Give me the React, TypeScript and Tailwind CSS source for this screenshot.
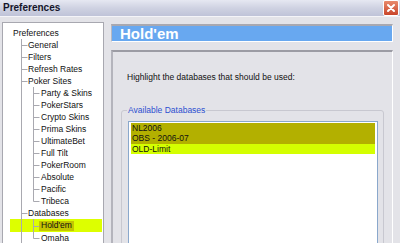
import type { ReactNode } from 'react'

type Node = { label: string; level: number; lines: number[]; last?: boolean; selected?: boolean }

// lines: ancestor guide columns that run through this row
const TREE: Node[] = [
  { label: 'Preferences', level: 0, lines: [] },
  { label: 'General', level: 1, lines: [] },
  { label: 'Filters', level: 1, lines: [] },
  { label: 'Refresh Rates', level: 1, lines: [] },
  { label: 'Poker Sites', level: 1, lines: [] },
  { label: 'Party & Skins', level: 2, lines: [1] },
  { label: 'PokerStars', level: 2, lines: [1] },
  { label: 'Crypto Skins', level: 2, lines: [1] },
  { label: 'Prima Skins', level: 2, lines: [1] },
  { label: 'UltimateBet', level: 2, lines: [1] },
  { label: 'Full Tilt', level: 2, lines: [1] },
  { label: 'PokerRoom', level: 2, lines: [1] },
  { label: 'Absolute', level: 2, lines: [1] },
  { label: 'Pacific', level: 2, lines: [1] },
  { label: 'Tribeca', level: 2, lines: [1], last: true },
  { label: 'Databases', level: 1, lines: [] },
  { label: "Hold'em", level: 2, lines: [1], selected: true },
  { label: 'Omaha', level: 2, lines: [1], last: true },
]

const DATABASES = [
  { name: 'NL2006', bg: 'bg-[#b3b000]' },
  { name: 'OBS - 2006-07', bg: 'bg-[#b3b000]' },
  { name: 'OLD-Limit', bg: 'bg-[#d4ff00]' },
]

const LINE = '#a9a9b0'

function Guides({ node, h }: { node: Node; h: number }) {
  if (node.level === 0) return <div className="w-[10px] shrink-0" />
  const width = node.level === 1 ? 25 : 38
  const col = node.level === 1 ? 18.5 : 30.5
  const mid = Math.round(h / 2) + 0.5
  return (
    <svg width={width} height={h} className="shrink-0">
      {node.lines.includes(1) && <line x1={18.5} y1={0} x2={18.5} y2={h} stroke={LINE} />}
      <line x1={col} y1={0} x2={col} y2={node.last ? mid : h} stroke={LINE} />
      <line x1={col} y1={mid} x2={col + 6} y2={mid} stroke={LINE} />
    </svg>
  )
}

function TreeRow({ node }: { node: Node }) {
  if (node.selected) {
    return (
      <div className="flex items-center h-[13px] text-[8.5px] leading-none text-[#111] bg-gradient-to-r from-white from-[7px] to-[#ddff00] to-[7px] mr-[1px]">
        <Guides node={node} h={13} />
        <span className="bg-[#c4c600] px-[2px] h-[10px] flex items-center -ml-[2px]">{node.label}</span>
      </div>
    )
  }
  return (
    <div className="flex items-center h-[12px] text-[8.5px] leading-none text-[#111]">
      <Guides node={node} h={12} />
      <span>{node.label}</span>
    </div>
  )
}

function Sunken({ children, className }: { children: ReactNode; className?: string }) {
  return (
    <div className={`border-t-2 border-l-2 border-t-[#9c9ca4] border-l-[#b4b4bc] border-r border-b border-r-white border-b-white ${className ?? ''}`}>
      {children}
    </div>
  )
}

export default function App() {
  return (
    <div
      className="w-[400px] h-[243px] overflow-hidden bg-[#e3e3e8] flex flex-col"
      style={{ fontFamily: '"Liberation Sans", Arial, sans-serif' }}
    >
      {/* Title bar */}
      <div className="h-[17px] shrink-0 flex items-center justify-between pl-[3px] bg-gradient-to-b from-[#e6e8f2] via-[#cfd2e2] to-[#bfc3d8] border-b border-[#f4f4f8]">
        <span className="text-[10px] font-bold text-[#15152a] leading-none">Preferences</span>
        <div className="w-[16px] h-[16px] rounded-[2px] border border-white bg-gradient-to-b from-[#e88a6c] to-[#c8442a] flex items-center justify-center mr-[1px]">
          <svg width="10" height="10" viewBox="0 0 10 10">
            <path d="M2 2 L8 8 M8 2 L2 8" stroke="white" strokeWidth="2" strokeLinecap="round" />
          </svg>
        </div>
      </div>

      <div className="flex flex-1 pt-[5px] pl-[2px] min-h-0">
        {/* Tree panel */}
        <div className="w-[102px] shrink-0 bg-white border border-[#a8a8b0] border-b-0 pt-[4px] overflow-hidden">
          {TREE.map(n => (
            <TreeRow key={n.label} node={n} />
          ))}
        </div>

        {/* Right side */}
        <div className="ml-[7px] w-[282px] flex flex-col pt-[2px]">
          <div className="h-[23px] bg-[#68a8f0] border-t-2 border-t-[#a8a8b0] border-l border-l-[#b8b8c0] border-r border-r-white border-b border-b-white flex items-center pl-[8px]">
            <span className="text-[15px] font-bold text-white leading-none">Hold'em</span>
          </div>

          <Sunken className="mt-[8px] flex-1 flex flex-col pl-[14px] pr-[8px]">
            <p className="mt-[21px] text-[8.5px] leading-none text-[#111]">Highlight the databases that should be used:</p>

            {/* Group box */}
            <div className="mt-[28px] flex-1 border border-[#c8c8d0] rounded-[3px] -ml-[6px] pl-[6px] pr-[5px] pt-[10px] relative">
              <span className="absolute -top-[5px] left-[5px] px-[1px] bg-[#e3e3e8] text-[8.5px] leading-none text-[#2c4fd0]">
                Available Databases
              </span>
              <div className="h-[140px] bg-white border border-[#8aa8cc] pt-[1px] px-[2px]">
                {DATABASES.map(d => (
                  <div key={d.name} className={`${d.bg} h-[10.5px] flex items-center text-[8.5px] leading-none text-[#111] pl-[1px]`}>
                    {d.name}
                  </div>
                ))}
              </div>
            </div>
          </Sunken>
        </div>
      </div>
    </div>
  )
}
